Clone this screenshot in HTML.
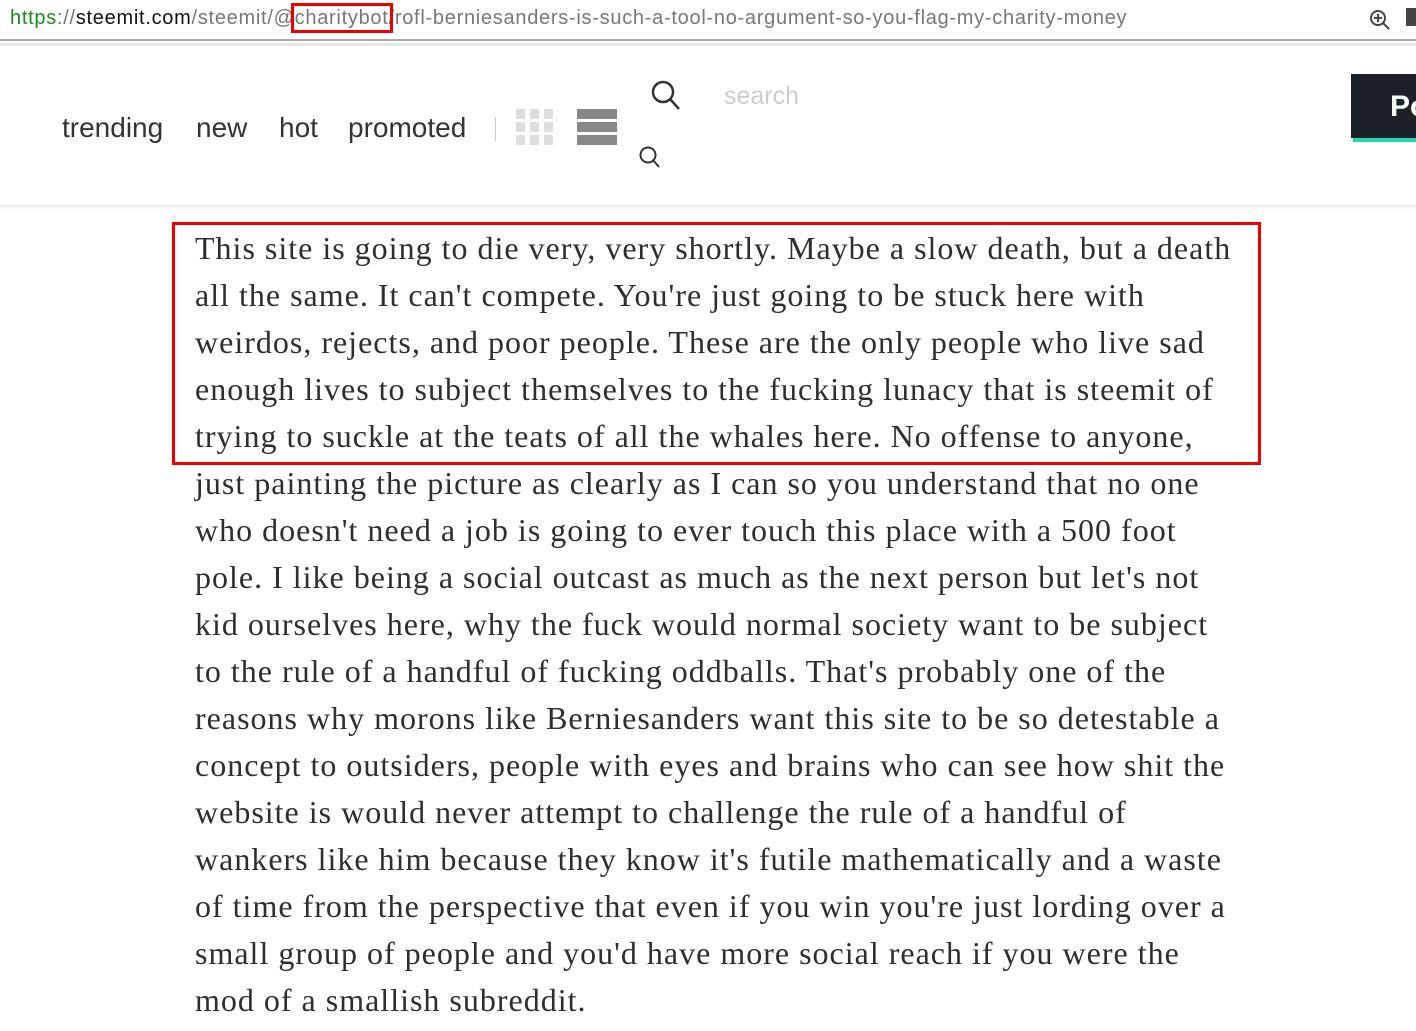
<!DOCTYPE html>
<html><head><meta charset="utf-8"><style>
body{margin:0;width:1416px;height:1031px;overflow:hidden;background:#fff;position:relative;font-family:"Liberation Sans",sans-serif}
.abs{position:absolute}
#url{left:10px;top:7px;font-size:20px;letter-spacing:0.72px;color:#777;white-space:nowrap}
#bar{left:0;top:39px;width:1416px;height:2px;background:#aaa}
#bar2{left:0;top:43px;width:1416px;height:3px;background:#e6e6e6}
.nav{top:112px;font-size:28px;color:#333}
#hdr{left:0;top:205px;width:1416px;height:6px;background:linear-gradient(#eee,#fff)}
.ln{position:absolute;left:195px;font-family:"Liberation Serif",serif;font-size:32px;letter-spacing:1px;color:#2e2e2e;white-space:nowrap;line-height:47px}
</style></head><body>
<div class="abs" id="url"><span style="color:#1a8a1a">https</span>://<span style="color:#111">steemit.com</span>/steemit/@<span style="color:#777;outline:3px solid #e00;outline-offset:1px">charitybot</span>/rofl-berniesanders-is-such-a-tool-no-argument-so-you-flag-my-charity-money</div>
<svg class="abs" style="left:1368px;top:8px" width="24" height="24"><circle cx="10" cy="10" r="7" fill="none" stroke="#444" stroke-width="2"/><path d="M15 15l6 6M10 6v8M6 10h8" stroke="#444" stroke-width="2"/></svg>
<div class="abs" style="left:1406px;top:8px;width:10px;height:18px;background:#444"></div>
<div class="abs" id="bar"></div><div class="abs" id="bar2"></div>
<div class="abs nav" style="left:62px">trending</div>
<div class="abs nav" style="left:196px">new</div>
<div class="abs nav" style="left:279px">hot</div>
<div class="abs nav" style="left:348px">promoted</div>
<div class="abs" style="left:495px;top:117px;width:1px;height:24px;background:#ccc"></div>
<svg class="abs" style="left:516px;top:109px" width="40" height="36"><g fill="#ddd"><rect x="0" y="0" width="9" height="10"/><rect x="14" y="0" width="9" height="10"/><rect x="28" y="0" width="9" height="10"/><rect x="0" y="13" width="9" height="10"/><rect x="14" y="13" width="9" height="10"/><rect x="28" y="13" width="9" height="10"/><rect x="0" y="26" width="9" height="10"/><rect x="14" y="26" width="9" height="10"/><rect x="28" y="26" width="9" height="10"/></g></svg>
<svg class="abs" style="left:577px;top:109px" width="40" height="36"><g fill="#888"><rect x="0" y="0" width="40" height="10"/><rect x="0" y="13" width="40" height="10"/><rect x="0" y="26" width="40" height="10"/></g></svg>
<svg class="abs" style="left:650px;top:79px" width="32" height="32"><circle cx="13" cy="13" r="10" fill="none" stroke="#333" stroke-width="2.5"/><path d="M20 20l9 10" stroke="#333" stroke-width="2.5"/></svg>
<svg class="abs" style="left:638px;top:145px" width="24" height="24"><circle cx="10" cy="10" r="7.5" fill="none" stroke="#333" stroke-width="2"/><path d="M15 15l6 7" stroke="#333" stroke-width="2"/></svg>
<div class="abs" style="left:724px;top:82px;font-size:25px;color:#ccc">search</div>
<div class="abs" style="left:1351px;top:74px;width:65px;height:64px;background:#1b2127"></div>
<div class="abs" style="left:1353px;top:138px;width:63px;height:4px;background:#1fd7a8"></div>
<div class="abs" style="left:1390px;top:90px;font-size:30px;font-weight:bold;color:#fff">Po</div>
<div class="abs" id="hdr"></div>
<div class="abs" style="left:172px;top:222px;width:1083px;height:237px;border:3px solid #e00"></div>
<div class="ln" style="top:225px">This site is going to die very, very shortly. Maybe a slow death, but a death</div>
<div class="ln" style="top:272px">all the same. It can't compete. You're just going to be stuck here with</div>
<div class="ln" style="top:319px">weirdos, rejects, and poor people. These are the only people who live sad</div>
<div class="ln" style="top:366px">enough lives to subject themselves to the fucking lunacy that is steemit of</div>
<div class="ln" style="top:413px">trying to suckle at the teats of all the whales here. No offense to anyone,</div>
<div class="ln" style="top:460px">just painting the picture as clearly as I can so you understand that no one</div>
<div class="ln" style="top:507px">who doesn't need a job is going to ever touch this place with a 500 foot</div>
<div class="ln" style="top:554px">pole. I like being a social outcast as much as the next person but let's not</div>
<div class="ln" style="top:601px">kid ourselves here, why the fuck would normal society want to be subject</div>
<div class="ln" style="top:648px">to the rule of a handful of fucking oddballs. That's probably one of the</div>
<div class="ln" style="top:695px">reasons why morons like Berniesanders want this site to be so detestable a</div>
<div class="ln" style="top:742px">concept to outsiders, people with eyes and brains who can see how shit the</div>
<div class="ln" style="top:789px">website is would never attempt to challenge the rule of a handful of</div>
<div class="ln" style="top:836px">wankers like him because they know it's futile mathematically and a waste</div>
<div class="ln" style="top:883px">of time from the perspective that even if you win you're just lording over a</div>
<div class="ln" style="top:930px">small group of people and you'd have more social reach if you were the</div>
<div class="ln" style="top:977px">mod of a smallish subreddit.</div>
</body></html>
